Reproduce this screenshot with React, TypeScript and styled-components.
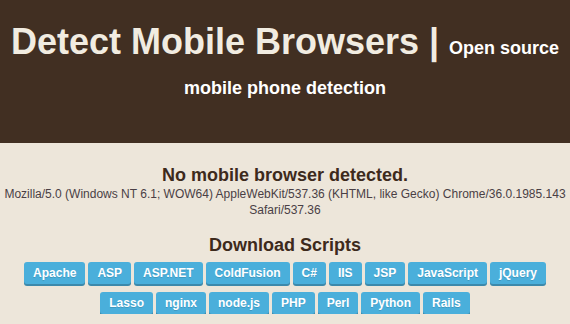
import React from "react";
import styled, { createGlobalStyle } from "styled-components";

const GlobalStyle = createGlobalStyle`
  html,
  body {
    margin: 0;
    padding: 0;
    background-color: #ede6da;
    font-family: "Liberation Sans", Arial, sans-serif;
  }
`;

const Header = styled.header`
  background-color: #412f22;
  padding: 22px 0 41px;
  text-align: center;
`;

const Title = styled.h1`
  margin: 0;
  font-size: 36px;
  line-height: 40px;
  font-weight: bold;
  color: #f1ece1;
`;

const Subtitle = styled.span`
  font-size: 18px;
  line-height: 20px;
  color: #ffffff;
`;

const Main = styled.main`
  padding: 22px 0 0;
  text-align: center;
  color: #3d2a1c;
`;

const Status = styled.h2`
  margin: 0;
  font-size: 18px;
  font-weight: bold;
`;

const UserAgent = styled.p`
  margin: 0;
  font-size: 12px;
  line-height: 16px;
  color: #4a3f45;
`;

const SectionTitle = styled.h2`
  margin: 17px 0 6px;
  font-size: 18px;
  font-weight: bold;
`;

const ButtonList = styled.div`
  display: flex;
  flex-wrap: wrap;
  justify-content: center;
  column-gap: 3px;
  row-gap: 8px;
  padding: 0 20px;
`;

const Button = styled.a`
  display: inline-block;
  height: 22px;
  padding: 0 9px;
  line-height: 22px;
  font-size: 12px;
  font-weight: bold;
  color: #ffffff;
  text-decoration: none;
  background-color: #4aafdb;
  border-radius: 3px;
  box-shadow: 0 2px 0 #3c89ab;
  text-shadow: 0 1px 0 rgba(0, 0, 0, 0.15);
`;

const scripts = [
  "Apache",
  "ASP",
  "ASP.NET",
  "ColdFusion",
  "C#",
  "IIS",
  "JSP",
  "JavaScript",
  "jQuery",
  "Lasso",
  "nginx",
  "node.js",
  "PHP",
  "Perl",
  "Python",
  "Rails",
];

const App = () => {
  return (
    <>
      <GlobalStyle />
      <Header>
        <Title>
          Detect Mobile Browsers | <Subtitle>Open source mobile phone detection</Subtitle>
        </Title>
      </Header>
      <Main>
        <Status>No mobile browser detected.</Status>
        <UserAgent>
          Mozilla/5.0 (Windows NT 6.1; WOW64) AppleWebKit/537.36 (KHTML, like Gecko)
          Chrome/36.0.1985.143 Safari/537.36
        </UserAgent>
        <SectionTitle>Download Scripts</SectionTitle>
        <ButtonList>
          {scripts.map((name) => (
            <Button key={name} href="#">
              {name}
            </Button>
          ))}
        </ButtonList>
      </Main>
    </>
  );
};

export default App;
